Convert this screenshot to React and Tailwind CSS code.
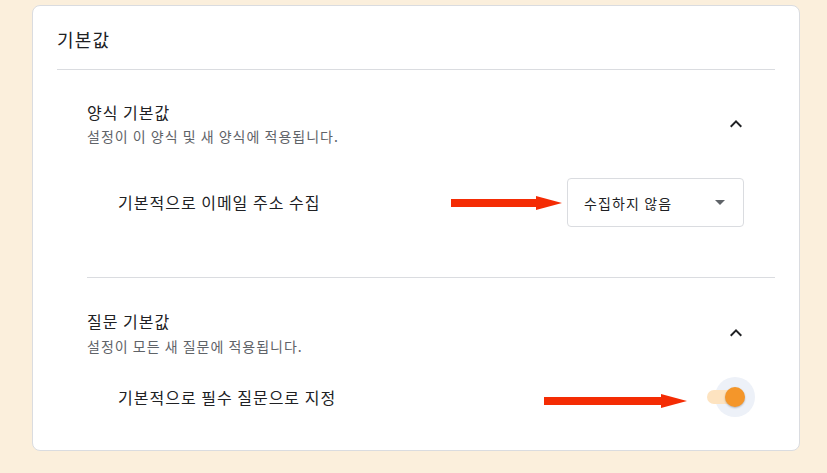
import React from "react";

function Chevron() {
  return (
    <svg width="24" height="24" viewBox="0 0 24 24" className="shrink-0">
      <path d="M12 8l-6 6 1.41 1.41L12 10.83l4.59 4.58L18 14z" fill="#202124" />
    </svg>
  );
}

function Arrow({ width }) {
  const head = 26;
  return (
    <svg width={width} height="14" viewBox={`0 0 ${width} 14`} className="shrink-0">
      <rect x="0" y="3" width={width - head + 1} height="8" fill="#f42c04" />
      <polygon points={`${width - head},0 ${width},7 ${width - head},14`} fill="#f42c04" />
    </svg>
  );
}

export default function App() {
  return (
    <div
      className="w-full h-[473px] bg-[#fbefdc] pt-[5px] pl-[32px] pr-[27px]"
      style={{ fontFamily: '"Noto Sans CJK KR", "Noto Sans", sans-serif' }}
    >
      <div className="h-[446px] bg-white border border-[#dadce0] rounded-lg px-6">
        <div className="h-[64px] border-b border-[#dadce0] pt-[21px]">
          <div className="text-[18px] leading-[24px] tracking-[1.2px] text-[#202124]">기본값</div>
        </div>

        <div className="ml-[30px] border-b border-[#dadce0] pt-[31px] pb-[50px]">
          <div className="flex items-center justify-between pr-[27px]">
            <div className="flex flex-col gap-[3px]">
              <div className="text-[16px] leading-[22px] tracking-[1px] text-[#202124]">양식 기본값</div>
              <div className="text-[14px] leading-[20px] tracking-[1px] text-[#5f6368]">
                설정이 이 양식 및 새 양식에 적용됩니다.
              </div>
            </div>
            <Chevron />
          </div>
          <div className="mt-[32px] flex items-center justify-between pl-[31px] pr-[31px]">
            <div className="text-[16px] leading-[22px] tracking-[1px] text-[#202124] -mt-[2px]">기본적으로 이메일 주소 수집</div>
            <div className="flex items-center gap-[5px]">
              <Arrow width={111} />
              <div className="w-[177px] h-[49px] border border-[#dadce0] rounded-[4px] flex items-center justify-between pl-4 pr-[18px]">
                <span className="text-[14px] leading-[20px] tracking-[1.1px] text-[#202124]">수집하지 않음</span>
                <svg width="10" height="5" viewBox="0 0 10 5">
                  <path d="M0 0l5 5 5-5z" fill="#5f6368" />
                </svg>
              </div>
            </div>
          </div>
        </div>

        <div className="ml-[30px] pt-[32px]">
          <div className="flex items-center justify-between pr-[27px]">
            <div className="flex flex-col gap-[4px]">
              <div className="text-[16px] leading-[22px] tracking-[1px] text-[#202124]">질문 기본값</div>
              <div className="text-[14px] leading-[20px] tracking-[1px] text-[#5f6368]">
                설정이 모든 새 질문에 적용됩니다.
              </div>
            </div>
            <Chevron />
          </div>
          <div className="mt-[21px] flex items-center justify-between pl-[31px] pr-[20px]">
            <div className="text-[16px] leading-[22px] tracking-[1px] text-[#202124]">기본적으로 필수 질문으로 지정</div>
            <div className="flex items-center gap-[20px]">
              <div className="mt-2">
                <Arrow width={143} />
              </div>
              <div className="relative w-[48px] h-[40px]">
                <div className="absolute left-[8px] top-0 w-[40px] h-[40px] rounded-full bg-[#edf1f8]" />
                <div className="absolute left-0 top-[13px] w-[36px] h-[14px] rounded-full bg-[#fde3c0]" />
                <div className="absolute left-[18px] top-[10px] w-[20px] h-[20px] rounded-full bg-[#f4962a] shadow-[0_1px_2px_rgba(0,0,0,0.25)]" />
              </div>
            </div>
          </div>
        </div>
      </div>
    </div>
  );
}
